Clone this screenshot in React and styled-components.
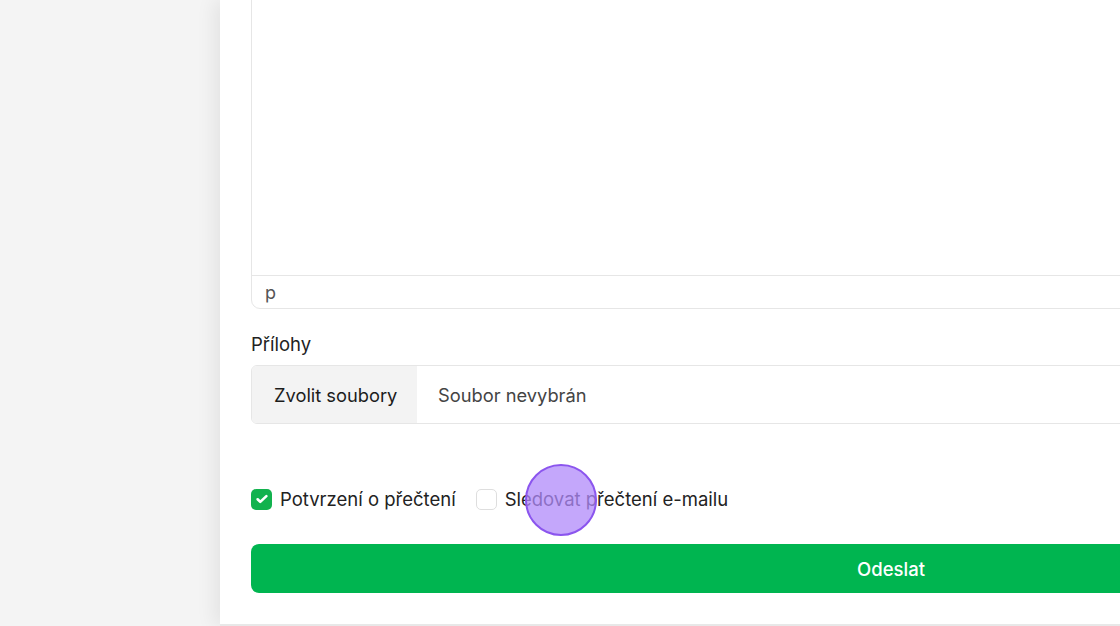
import React from 'react';
import styled, { createGlobalStyle } from 'styled-components';

const GlobalStyle = createGlobalStyle`
    html, body {
        margin: 0;
        padding: 0;
        height: 626px;
        overflow: hidden;
        background: #f4f4f4;
        font-family: Inter, "Noto Sans", sans-serif;
    }
`;

const Page = styled.div`
    display: flex;
    height: 626px;
    overflow: hidden;
`;

const Sidebar = styled.div`
    flex: 0 0 220px;
    background: #f4f4f4;
`;

const Panel = styled.div`
    flex: 0 0 1343px;
    height: 626px;
    background: #fff;
    border-bottom: 2px solid #e8e8e8;
    box-shadow: -6px 0 18px rgba(0, 0, 0, 0.07);
    padding: 0 32px 0 31px;
    box-sizing: border-box;
    display: flex;
    flex-direction: column;
    position: relative;
`;

const Editor = styled.div`
    margin-top: -20px;
    border: 1.5px solid #e6e6e6;
    border-radius: 0 0 9px 9px;
    display: flex;
    flex-direction: column;
`;

const EditorArea = styled.div`
    height: 294px;
    border-bottom: 1.5px solid #e6e6e6;
`;

const StatusBar = styled.div`
    height: 32px;
    padding-left: 13px;
    display: flex;
    align-items: center;
    font-size: 18px;
    color: #555;
`;

const Label = styled.div`
    margin-top: 24px;
    font-size: 18.5px;
    line-height: 22px;
    color: #222;
`;

const FileBox = styled.div`
    margin-top: 10px;
    height: 59px;
    border: 1.5px solid #e6e6e6;
    border-radius: 6px;
    box-sizing: border-box;
    display: flex;
    overflow: hidden;
`;

const FileButton = styled.div`
    width: 165px;
    background: #f3f3f3;
    display: flex;
    align-items: center;
    padding-left: 22px;
    box-sizing: border-box;
    font-size: 18.3px;
    color: #1c1c1c;
`;

const FileName = styled.div`
    display: flex;
    align-items: center;
    padding-left: 21px;
    font-size: 18.3px;
    color: #444;
`;

const CheckRow = styled.div`
    margin-top: 63px;
    display: flex;
    align-items: center;
    gap: 20px;
    height: 24px;
    line-height: 24px;
`;

const CheckItem = styled.label`
    display: flex;
    align-items: center;
    gap: 8px;
    font-size: 18.5px;
    color: #222;
`;

const Box = styled.span`
    flex: 0 0 21px;
    width: 21px;
    height: 21px;
    border-radius: 5px;
    box-sizing: border-box;
    display: flex;
    align-items: center;
    justify-content: center;
    background: ${p => (p.checked ? '#12b24e' : '#fff')};
    border: ${p => (p.checked ? 'none' : '1.5px solid #dedede')};
`;

const SubmitButton = styled.button`
    margin-top: 33px;
    height: 49px;
    border: none;
    border-radius: 8px;
    background: #00b550;
    color: #fff;
    font-family: Inter, "Noto Sans", sans-serif;
    font-size: 18.5px;
    font-weight: 500;
`;

const ClickMarker = styled.div`
    position: absolute;
    left: 305px;
    top: 464px;
    width: 68px;
    height: 68px;
    border-radius: 50%;
    background: rgba(176, 137, 250, 0.75);
    border: 2px solid #8b55ee;
    pointer-events: none;
`;

function Checkbox({ checked, children }) {
    return (
        <CheckItem>
            <Box checked={checked}>
                {checked && (
                    <svg width="14" height="14" viewBox="0 0 24 24" fill="none" stroke="#fff" strokeWidth="4.5" strokeLinecap="round" strokeLinejoin="round">
                        <path d="M4.5 12.5l4.5 4.5L19.5 7" />
                    </svg>
                )}
            </Box>
            {children}
        </CheckItem>
    );
}

export default function App() {
    return (
        <Page>
            <GlobalStyle />
            <Sidebar />
            <Panel>
                <Editor>
                    <EditorArea />
                    <StatusBar>p</StatusBar>
                </Editor>
                <Label>Přílohy</Label>
                <FileBox>
                    <FileButton>Zvolit soubory</FileButton>
                    <FileName>Soubor nevybrán</FileName>
                </FileBox>
                <CheckRow>
                    <Checkbox checked>Potvrzení o přečtení</Checkbox>
                    <Checkbox>Sledovat přečtení e-mailu</Checkbox>
                </CheckRow>
                <SubmitButton>Odeslat</SubmitButton>
                <ClickMarker />
            </Panel>
        </Page>
    );
}
